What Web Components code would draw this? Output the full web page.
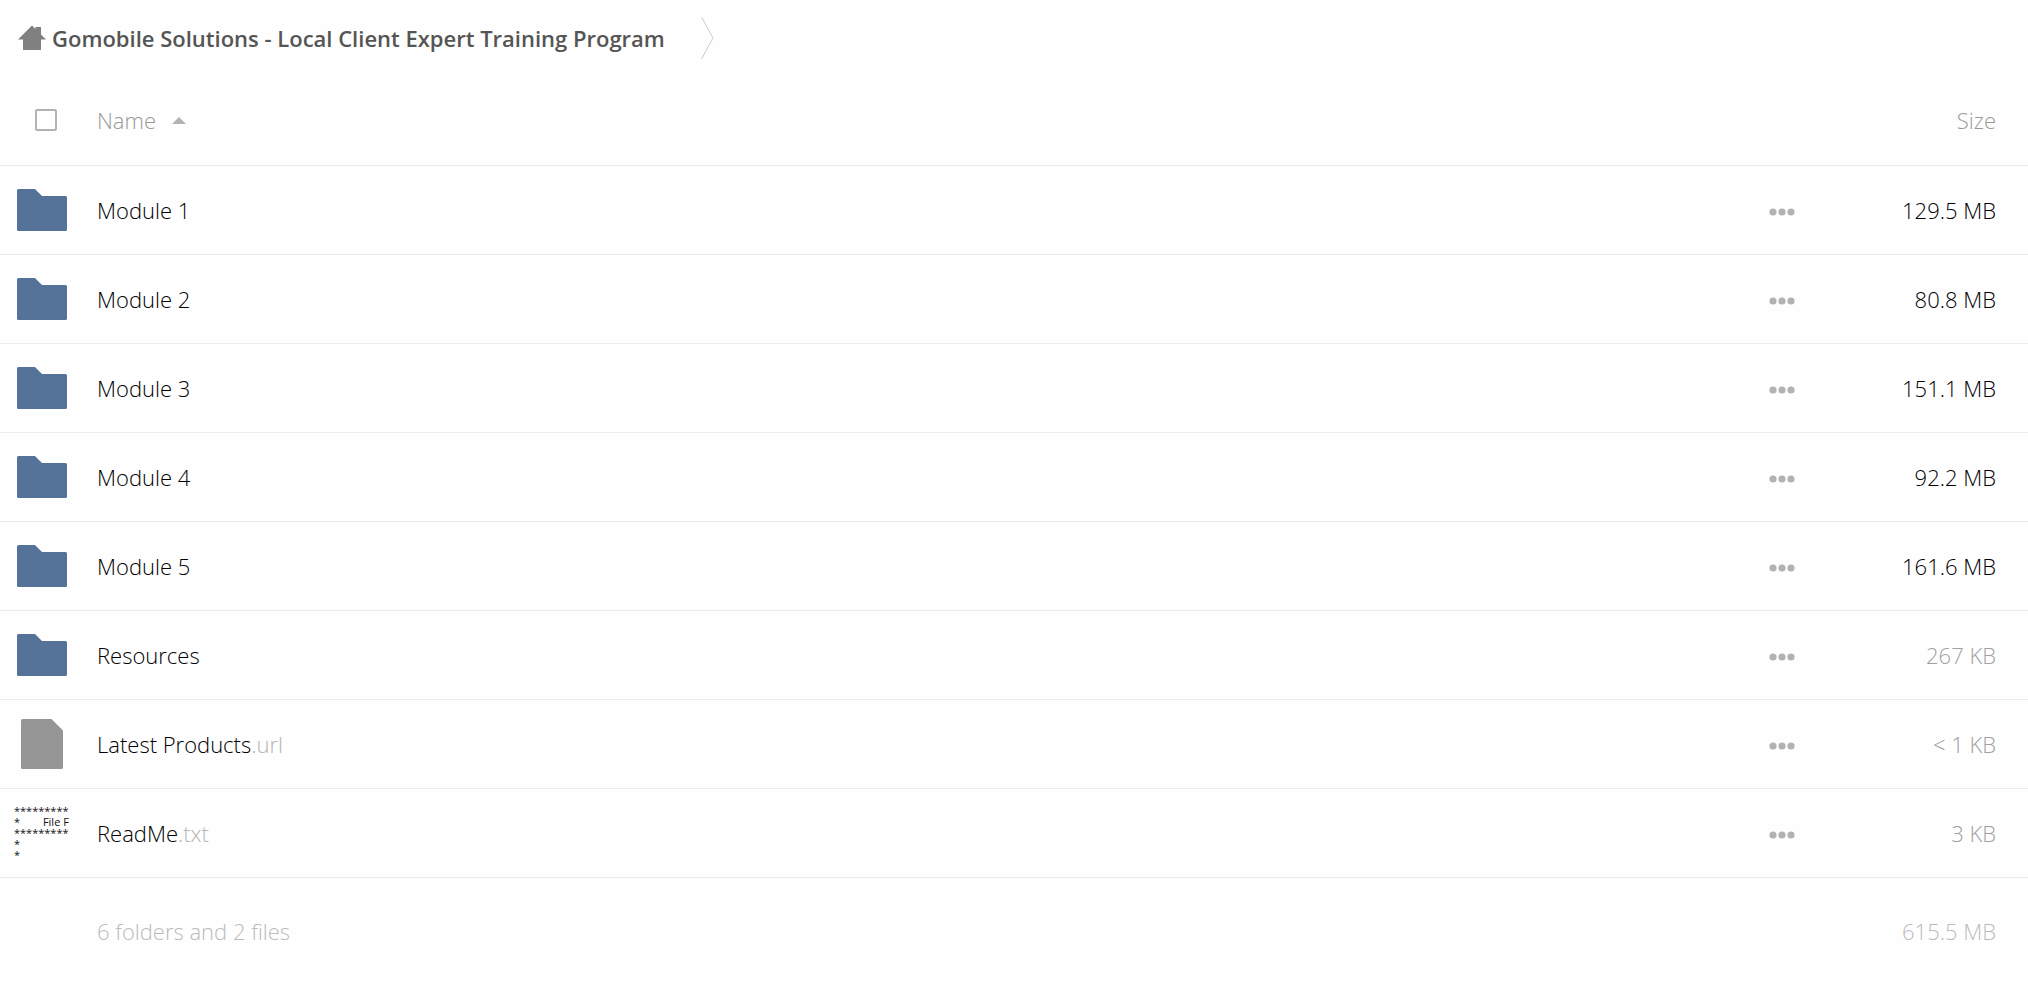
<!DOCTYPE html>
<html lang="en">
<head>
<meta charset="utf-8">
<meta name="viewport" content="width=device-width, initial-scale=1">
<title>Gomobile Solutions - Local Client Expert Training Program</title>
<style>
  body {
    margin: 0;
    background: #fefefe;
    color: #000;
    font-family: "Open Sans", sans-serif;
    font-size: 22px;
    font-weight: 300;
    line-height: 30px;
  }
</style>
</head>
<body>

<crumb-bar>
  <a-crumb href="#">Gomobile Solutions - Local Client Expert Training Program</a-crumb>
</crumb-bar>

<file-list>
  <file-entry kind="folder" name="Module 1" size="129.5 MB"></file-entry>
  <file-entry kind="folder" name="Module 2" size="80.8 MB"></file-entry>
  <file-entry kind="folder" name="Module 3" size="151.1 MB"></file-entry>
  <file-entry kind="folder" name="Module 4" size="92.2 MB"></file-entry>
  <file-entry kind="folder" name="Module 5" size="161.6 MB"></file-entry>
  <file-entry kind="folder" name="Resources" size="267 KB"></file-entry>
  <file-entry kind="file" name="Latest Products" ext=".url" size="&lt; 1 KB"></file-entry>
  <file-entry kind="text" name="ReadMe" ext=".txt" size="3 KB"></file-entry>
  <span slot="summary">6 folders and 2 files</span>
  <span slot="total">615.5 MB</span>
</file-list>

<script>
class CrumbBar extends HTMLElement {
  constructor() {
    super();
    this.attachShadow({ mode: "open" }).innerHTML = `
      <style>
        :host {
          display: block;
        }

        nav {
          display: flex;
          align-items: center;
          height: 76px;
          padding: 0 18px;
        }
      </style>
      <nav aria-label="Breadcrumb"><slot></slot></nav>
    `;
  }
}

class ACrumb extends HTMLElement {
  constructor() {
    super();
    const href = this.getAttribute("href") || "#";

    this.attachShadow({ mode: "open" }).innerHTML = `
      <style>
        :host {
          display: flex;
          align-items: center;
          gap: 36px;
        }

        a {
          display: flex;
          align-items: center;
          gap: 6px;
          color: #555;
          font-weight: 600;
          text-decoration: none;
        }

        svg {
          display: block;
          flex: none;
        }
      </style>
      <a href="${href}">
        <svg width="28" height="26" viewBox="0 0 28 26" fill="#808080" aria-hidden="true">
          <path d="M0 14.500 14 .5l3.400 3.400V2H23v7.400l5 5.100h-5V25H5V14.500z"/>
        </svg>
        <span><slot></slot></span>
      </a>
      <svg width="13" height="44" viewBox="0 0 13 44" fill="none" stroke="#ccc" aria-hidden="true">
        <path d="M.5 1 12 22 .5 43"/>
      </svg>
    `;
  }
}

class FileIcon extends HTMLElement {
  constructor() {
    super();
    this.attachShadow({ mode: "open" });
  }

  connectedCallback() {
    const icons = {
      folder: `
        <svg width="50" height="42" viewBox="0 0 50 42" fill="#557299">
          <path d="M1.500 0H18l7 7h23.500Q50 7 50 8.500v32q0 1.500-1.500 1.500h-47Q0 42 0 40.500v-39Q0 0 1.500 0z"/>
        </svg>`,
      file: `
        <svg width="42" height="50" viewBox="0 0 42 50" fill="#969696">
          <path d="M1.500 0H30.500L42 11.500v37q0 1.500-1.500 1.500h-39Q0 50 0 48.500v-47Q0 0 1.500 0z"/>
        </svg>`,
      text: `<pre>*********\n*        File F\n*********\n*\n*</pre>`
    };

    this.shadowRoot.innerHTML = `
      <style>
        :host {
          display: flex;
          align-items: center;
          justify-content: center;
          width: 56px;
          height: 56px;
          overflow: hidden;
        }

        pre {
          width: 56px;
          height: 56px;
          margin: 0;
          color: #111;
          font: 400 11px/11px "Open Sans", sans-serif;
        }
      </style>
      ${icons[this.getAttribute("kind")] || icons.file}
    `;
  }
}

class FileList extends HTMLElement {
  constructor() {
    super();
    this.attachShadow({ mode: "open" }).innerHTML = `
      <style>
        :host {
          display: block;
        }

        table {
          width: 100%;
          border-collapse: collapse;
          table-layout: fixed;
        }

        .icon { width: 97px; }
        .actions { width: 64px; }
        .size { width: 214px; }

        th, td {
          box-sizing: border-box;
          height: 89px;
          padding: 0;
          border-bottom: 1px solid #ebebeb;
          font-weight: 300;
          text-align: left;
          vertical-align: middle;
        }

        th {
          color: #999;
        }

        td:first-child {
          padding-left: 14px;
        }

        th:first-child {
          padding-left: 35px;
        }

        th:last-child, td:last-child {
          padding-right: 32px;
          text-align: right;
        }

        tfoot td {
          height: 108px;
          border: 0;
          color: #bbb;
        }

        a {
          color: inherit;
          text-decoration: none;
        }

        .ext { color: #b5b5b5; }
        .small { color: #a0a0a0; }

        button {
          display: flex;
          align-items: center;
          padding: 0;
          border: 0;
          background: none;
          color: inherit;
          font: inherit;
          cursor: pointer;
        }

        .sort {
          gap: 16px;
        }

        .more {
          width: 64px;
          height: 44px;
          padding-top: 4px;
          justify-content: center;
        }

        input {
          appearance: none;
          display: block;
          box-sizing: border-box;
          width: 22px;
          height: 22px;
          margin: 0;
          border: 2px solid #b2b2b2;
          border-radius: 2px;
        }
      </style>

      <table>
        <colgroup>
          <col class="icon"><col><col class="actions"><col class="size">
        </colgroup>
        <thead>
          <tr>
            <th><input type="checkbox" aria-label="Select all"></th>
            <th>
              <button class="sort">Name
                <svg width="14" height="7" viewBox="0 0 14 7" fill="#b2b2b2" aria-hidden="true"><path d="M0 7 7 0l7 7z"/></svg>
              </button>
            </th>
            <th></th>
            <th>Size</th>
          </tr>
        </thead>
        <tbody></tbody>
        <tfoot>
          <tr>
            <td></td>
            <td><slot name="summary"></slot></td>
            <td></td>
            <td><slot name="total"></slot></td>
          </tr>
        </tfoot>
      </table>
    `;
  }

  connectedCallback() {
    const rows = [...this.querySelectorAll("file-entry")].map((entry) => {
      const name = entry.getAttribute("name");
      const ext = entry.getAttribute("ext") || "";
      const size = entry.getAttribute("size").replace("<", "&lt;");
      const small = size.endsWith("KB") ? ` class="small"` : "";

      return `
        <tr>
          <td><file-icon kind="${entry.getAttribute("kind")}"></file-icon></td>
          <td><a href="#">${name}<span class="ext">${ext}</span></a></td>
          <td>
            <button class="more" aria-label="Actions for ${name}">
              <svg width="26" height="8" viewBox="0 0 26 8" fill="#b2b2b2" aria-hidden="true">
                <circle cx="4" cy="4" r="3.600"/><circle cx="13" cy="4" r="3.600"/><circle cx="22" cy="4" r="3.600"/>
              </svg>
            </button>
          </td>
          <td${small}>${size}</td>
        </tr>`;
    });

    this.shadowRoot.querySelector("tbody").innerHTML = rows.join("");
  }
}

// Data only, drawn as a row by <file-list>
class FileEntry extends HTMLElement {
  constructor() {
    super();
    this.attachShadow({ mode: "open" }).innerHTML = `<style>:host { display: none; }</style>`;
  }
}

customElements.define("crumb-bar", CrumbBar);
customElements.define("a-crumb", ACrumb);
customElements.define("file-icon", FileIcon);
customElements.define("file-entry", FileEntry);
customElements.define("file-list", FileList);
</script>
</body>
</html>
